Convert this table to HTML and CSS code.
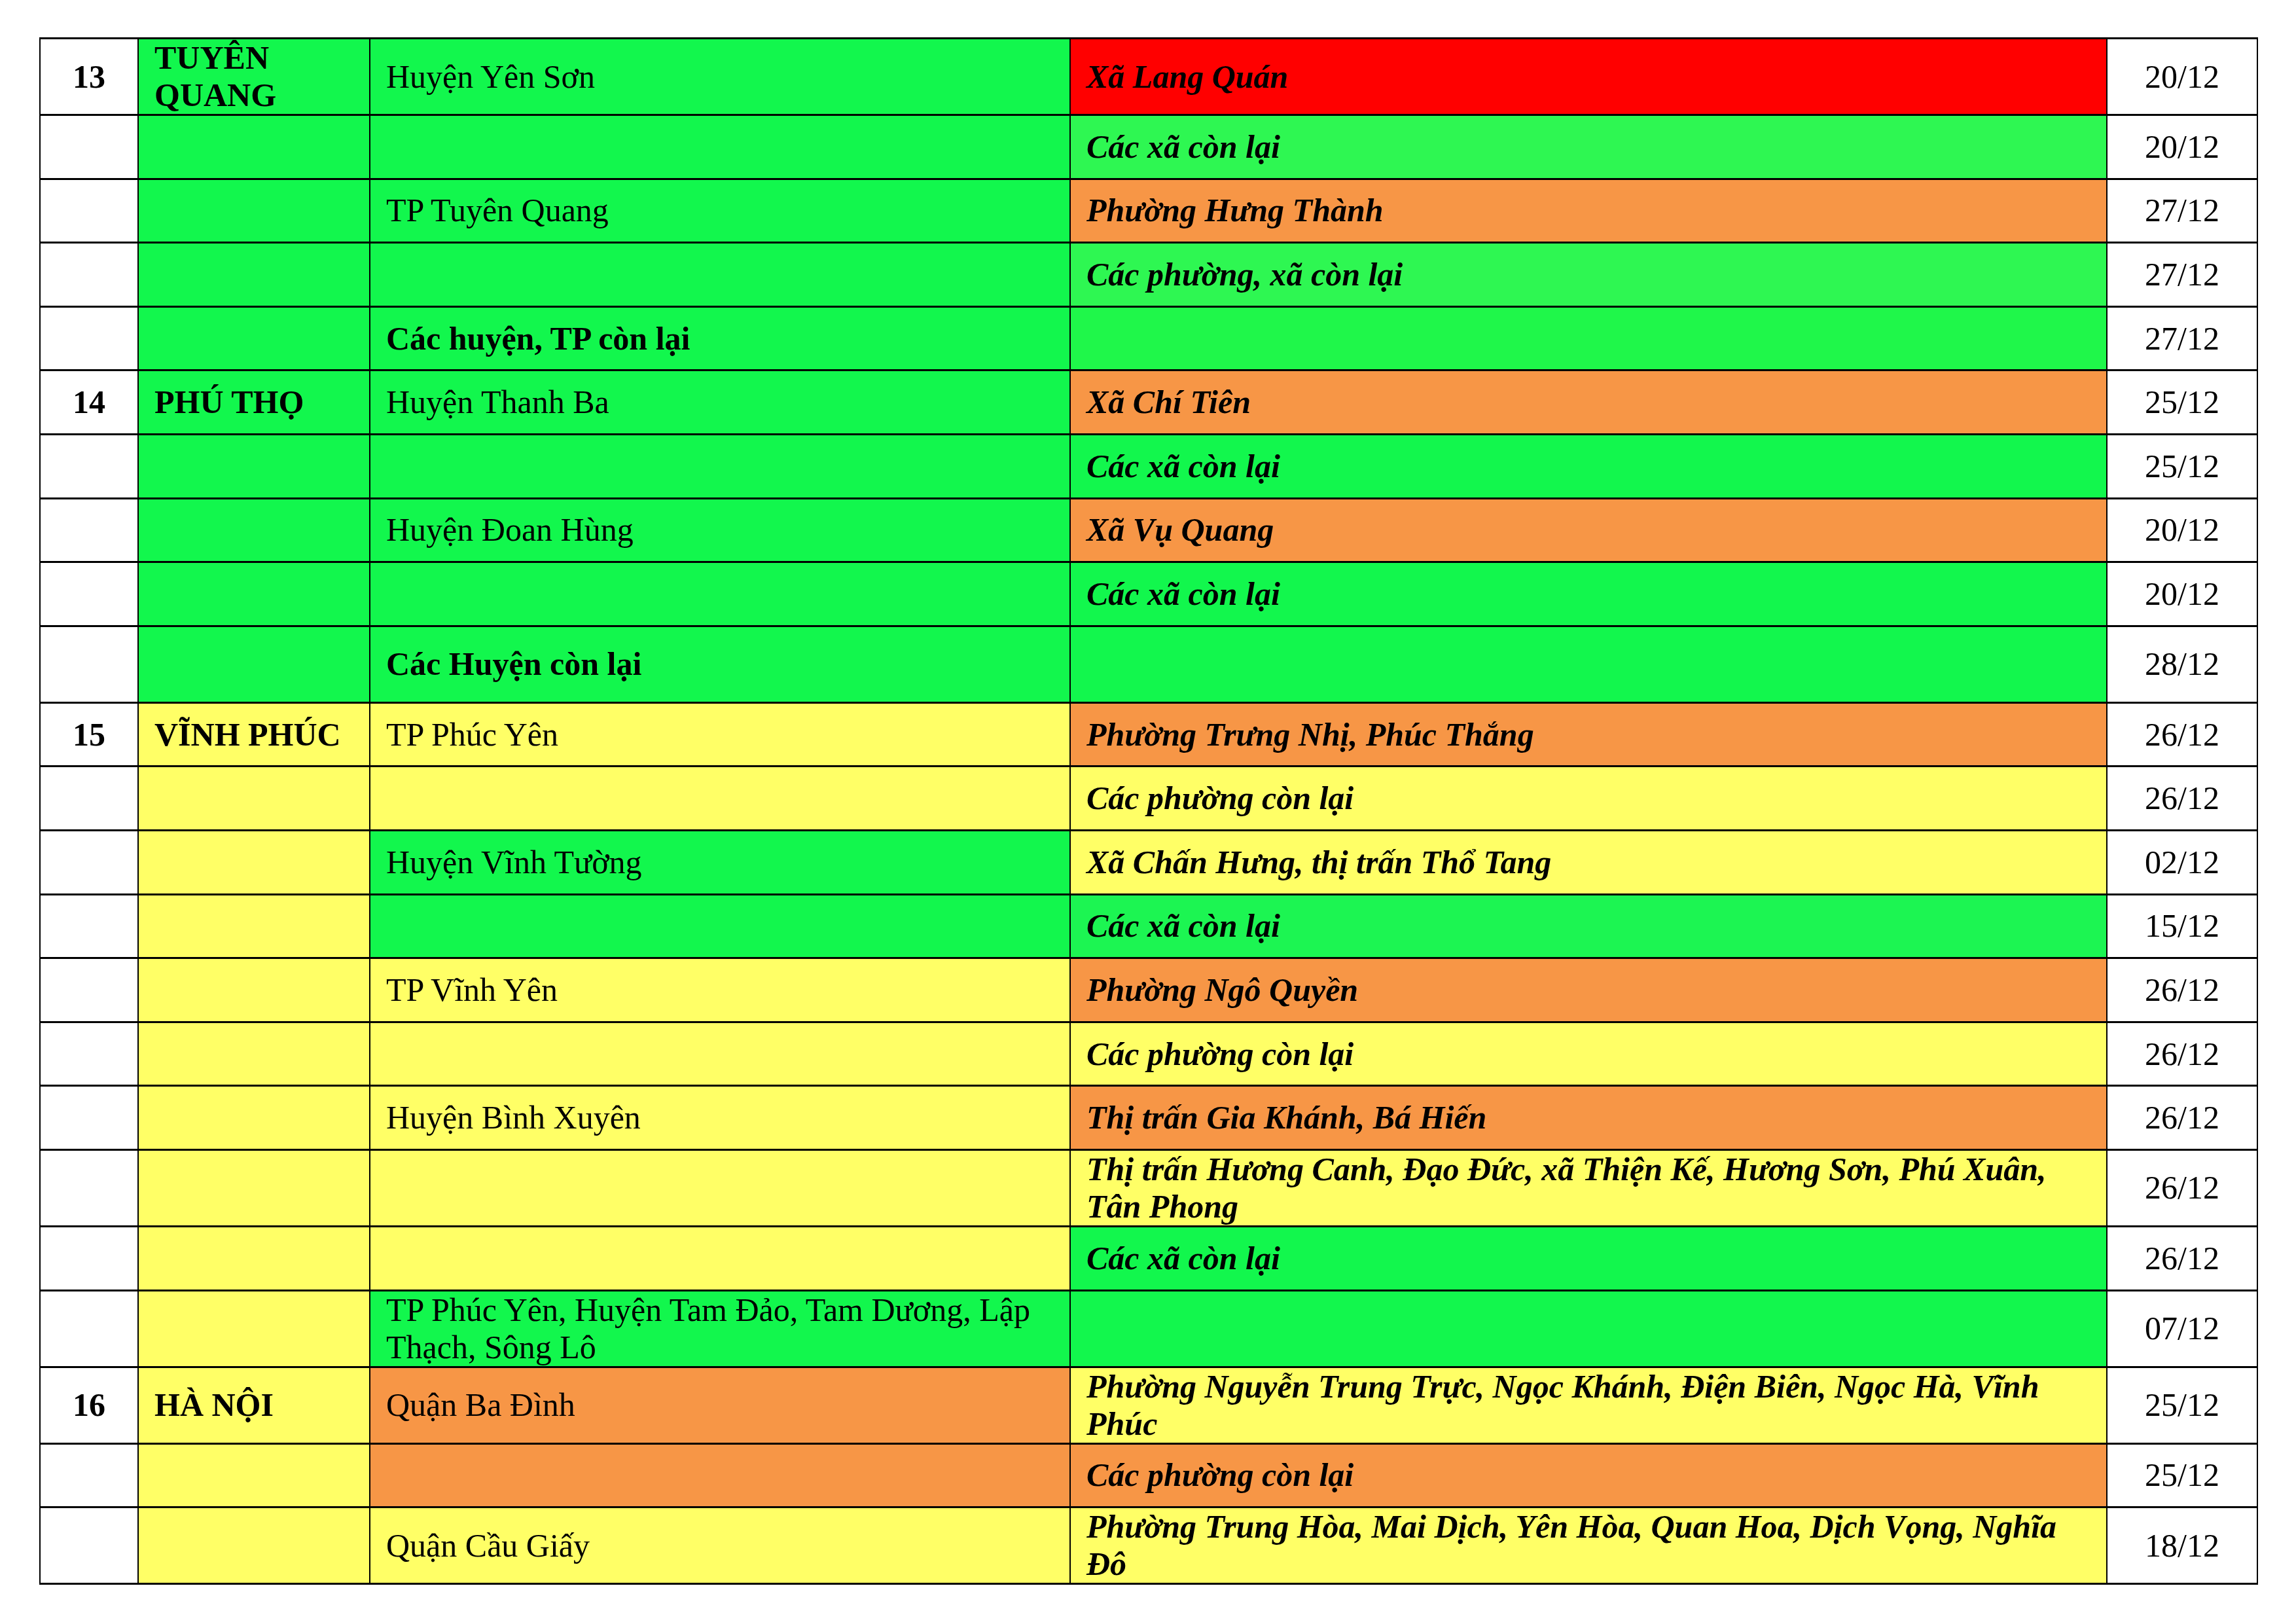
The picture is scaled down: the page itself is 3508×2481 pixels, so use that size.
FILE: index.html
```html
<!DOCTYPE html>
<html lang="vi">
<head>
<meta charset="utf-8">
<title>Bảng</title>
<link rel="stylesheet" href="styles.css">
</head>
<body>
<table class="grid">
  <colgroup>
    <col class="c-no"><col class="c-prov"><col class="c-dist"><col class="c-ward"><col class="c-date">
  </colgroup>
  <tbody>
    <tr class="tall"><td class="no">13</td><td class="prov g1">TUYÊN<br>QUANG</td><td class="dist g1">Huyện Yên Sơn</td><td class="ward red">Xã Lang Quán</td><td class="date">20/12</td></tr>
    <tr><td class="no"></td><td class="prov g1"></td><td class="dist g1"></td><td class="ward g2">Các xã còn lại</td><td class="date">20/12</td></tr>
    <tr><td class="no"></td><td class="prov g1"></td><td class="dist g1">TP Tuyên Quang</td><td class="ward org">Phường Hưng Thành</td><td class="date">27/12</td></tr>
    <tr><td class="no"></td><td class="prov g1"></td><td class="dist g1"></td><td class="ward g2">Các phường, xã còn lại</td><td class="date">27/12</td></tr>
    <tr><td class="no"></td><td class="prov g1"></td><td class="dist g1 b">Các huyện, TP còn lại</td><td class="ward g3"></td><td class="date">27/12</td></tr>
    <tr><td class="no">14</td><td class="prov g1">PHÚ THỌ</td><td class="dist g1">Huyện Thanh Ba</td><td class="ward org">Xã Chí Tiên</td><td class="date">25/12</td></tr>
    <tr><td class="no"></td><td class="prov g1"></td><td class="dist g1"></td><td class="ward g1">Các xã còn lại</td><td class="date">25/12</td></tr>
    <tr><td class="no"></td><td class="prov g1"></td><td class="dist g1">Huyện Đoan Hùng</td><td class="ward org">Xã Vụ Quang</td><td class="date">20/12</td></tr>
    <tr><td class="no"></td><td class="prov g1"></td><td class="dist g1"></td><td class="ward g1">Các xã còn lại</td><td class="date">20/12</td></tr>
    <tr class="tall"><td class="no"></td><td class="prov g1"></td><td class="dist g1 b">Các Huyện còn lại</td><td class="ward g1"></td><td class="date">28/12</td></tr>
    <tr><td class="no">15</td><td class="prov yel">VĨNH PHÚC</td><td class="dist yel">TP Phúc Yên</td><td class="ward org">Phường Trưng Nhị, Phúc Thắng</td><td class="date">26/12</td></tr>
    <tr><td class="no"></td><td class="prov yel"></td><td class="dist yel"></td><td class="ward yel">Các phường còn lại</td><td class="date">26/12</td></tr>
    <tr><td class="no"></td><td class="prov yel"></td><td class="dist g1">Huyện Vĩnh Tường</td><td class="ward yel">Xã Chấn Hưng, thị trấn Thổ Tang</td><td class="date">02/12</td></tr>
    <tr><td class="no"></td><td class="prov yel"></td><td class="dist g1"></td><td class="ward g4">Các xã còn lại</td><td class="date">15/12</td></tr>
    <tr><td class="no"></td><td class="prov yel"></td><td class="dist yel">TP Vĩnh Yên</td><td class="ward org">Phường Ngô Quyền</td><td class="date">26/12</td></tr>
    <tr><td class="no"></td><td class="prov yel"></td><td class="dist yel"></td><td class="ward yel">Các phường còn lại</td><td class="date">26/12</td></tr>
    <tr><td class="no"></td><td class="prov yel"></td><td class="dist yel">Huyện Bình Xuyên</td><td class="ward org">Thị trấn Gia Khánh, Bá Hiến</td><td class="date">26/12</td></tr>
    <tr class="tall"><td class="no"></td><td class="prov yel"></td><td class="dist yel"></td><td class="ward yel">Thị trấn Hương Canh, Đạo Đức, xã Thiện Kế, Hương Sơn, Phú Xuân, Tân Phong</td><td class="date">26/12</td></tr>
    <tr><td class="no"></td><td class="prov yel"></td><td class="dist yel"></td><td class="ward g1">Các xã còn lại</td><td class="date">26/12</td></tr>
    <tr class="tall"><td class="no"></td><td class="prov yel"></td><td class="dist g1">TP Phúc Yên, Huyện Tam Đảo, Tam Dương, Lập Thạch, Sông Lô</td><td class="ward g1"></td><td class="date">07/12</td></tr>
    <tr class="tall"><td class="no">16</td><td class="prov yel">HÀ NỘI</td><td class="dist org">Quận Ba Đình</td><td class="ward yel">Phường Nguyễn Trung Trực, Ngọc Khánh, Điện Biên, Ngọc Hà, Vĩnh Phúc</td><td class="date">25/12</td></tr>
    <tr><td class="no"></td><td class="prov yel"></td><td class="dist org"></td><td class="ward org">Các phường còn lại</td><td class="date">25/12</td></tr>
    <tr class="tall"><td class="no"></td><td class="prov yel"></td><td class="dist yel">Quận Cầu Giấy</td><td class="ward yel">Phường Trung Hòa, Mai Dịch, Yên Hòa, Quan Hoa, Dịch Vọng, Nghĩa Đô</td><td class="date">18/12</td></tr>
  </tbody>
</table>
</body>
</html>
```

FILE: styles.css
```css
html, body {
  margin: 0;
  padding: 0;
  background: #ffffff;
}

body {
  padding: 57px 0 0 60px;
  font-family: "Liberation Serif", "Times New Roman", serif;
  font-size: 50px;
  color: #000;
}

.grid {
  border-collapse: collapse;
  table-layout: fixed;
  width: 3388px;
  line-height: 57px;
}

.c-no { width: 150px; }
.c-prov { width: 354px; }
.c-dist { width: 1070px; }
.c-ward { width: 1584px; }
.c-date { width: 230px; }

.grid tr { height: 97.6px; }
.grid tr.tall { height: 117px; }

.grid td {
  border-left: 2px solid #000;
  border-right: 2px solid #000;
  border-top: 3px solid #000;
  border-bottom: 3px solid #000;
  padding: 0 20px 0 24px;
  vertical-align: middle;
  overflow: hidden;
}

.no {
  text-align: center;
  font-weight: bold;
  padding: 0 !important;
  background: #fff;
}

.prov { font-weight: bold; }
.b { font-weight: bold; }

.ward {
  font-weight: bold;
  font-style: italic;
}

.date {
  text-align: center;
  padding: 0 !important;
  background: #fff;
}

.g1 { background: #12f74d; }
.g2 { background: #2ef752; }
.g3 { background: #1ff74a; }
.g4 { background: #1cf552; }
.red { background: #ff0000; }
.org { background: #f79646; }
.yel { background: #ffff66; }
```
